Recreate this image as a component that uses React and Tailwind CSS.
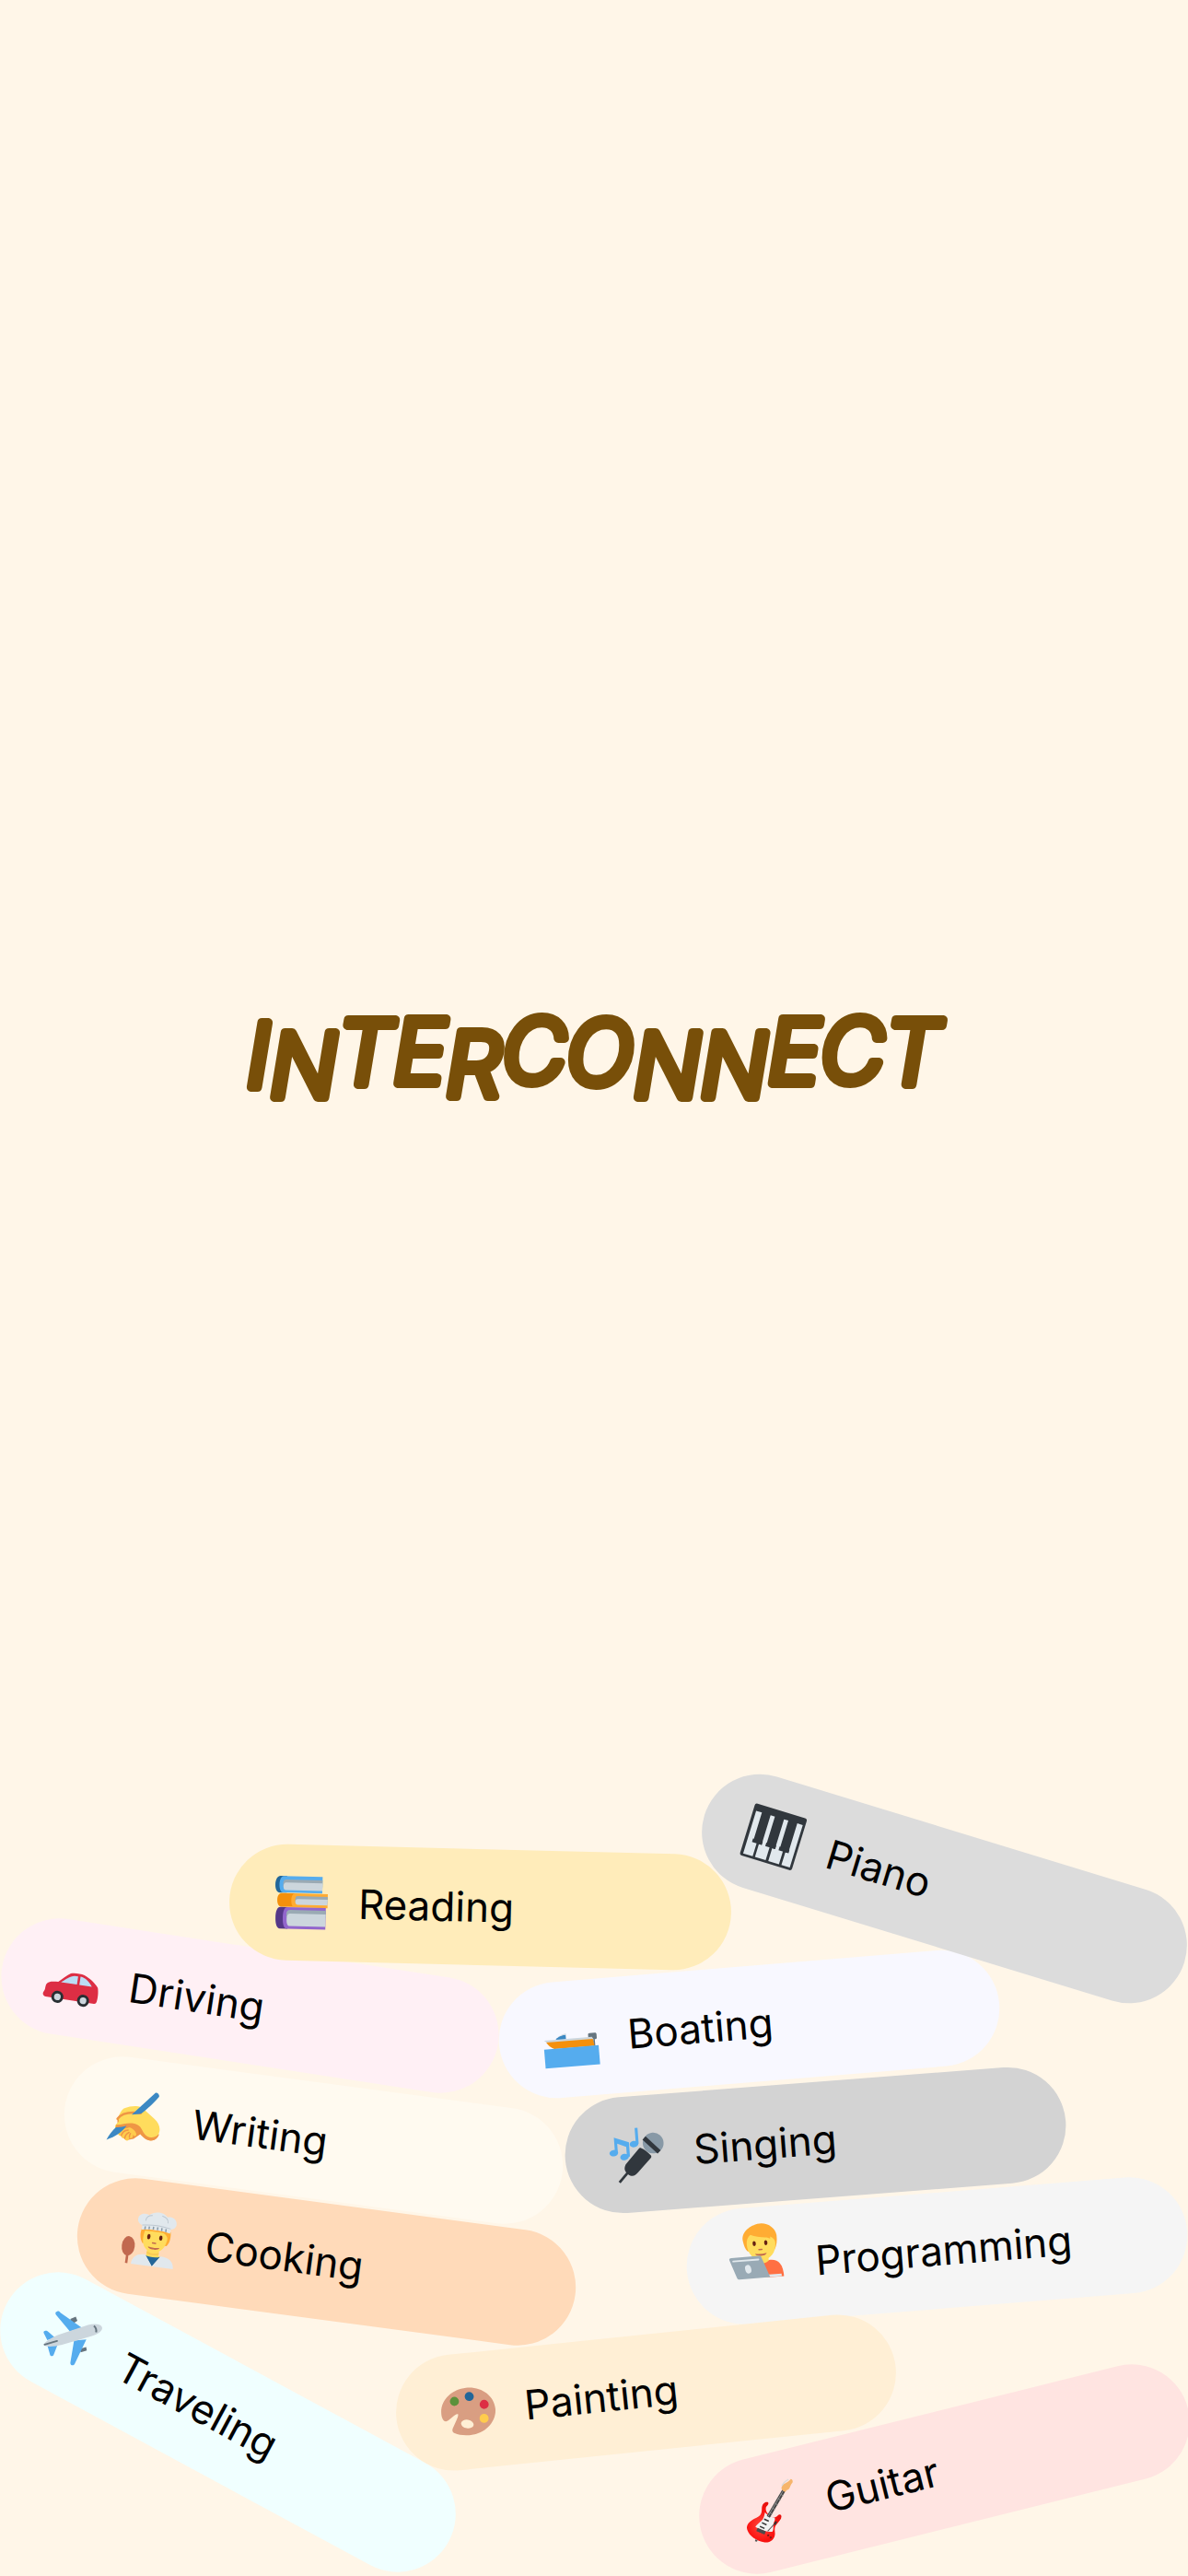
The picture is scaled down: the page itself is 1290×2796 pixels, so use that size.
import React from "react";

function Icon({ children }) {
  return (
    <svg viewBox="0 0 36 36" aria-hidden="true" className="size-full overflow-visible">
      {children}
    </svg>
  );
}

function PianoIcon() {
  return (
    <Icon>
      <rect width="36" height="36" rx="1.6" fill="#31373D" />
      <path fill="#E1E8ED" d="M2 4.8h4v18.800h2.600v10.700H2zM12 4.800h3v18.800h2.600v10.700h-7.400V25.400H12zM21.300 4.800h3v18.800h2.500v10.700h-7.400V25.400h1.900zM30.500 4.800h3.800v29.500h-5.800V25.400h2z" />
      <path fill="#31373D" d="M5.400 23h6.800v2.400H5.400zM14.600 23h6.900v2.400h-6.900zM23.800 23h6.900v2.400h-6.900z" />
    </Icon>
  );
}

function BooksIcon() {
  return (
    <Icon>
      <path fill="#226699" d="M3.600.3H8v11.100H3.400C1.500 11.400.3 9.300.3 6S1.700.3 3.600.3z" />
      <path fill="#55ACEE" d="M5.800.4h25.700v10.900H5.600C4 11.300 3 9.200 3 6S4.200.4 5.800.4z" />
      <path fill="#9AAAB4" d="M7.400 2.600h24.100v5H5.500v-3c0-1.200.7-2 1.900-2z" />
      <path fill="#CCD6DD" d="M7.500 4.600h24v5.100h-24C6.200 9.700 5.700 8.700 5.700 7.200s.5-2.600 1.800-2.600z" />
      <path fill="#F4900C" d="M4.700 11.700H14v9H4.700c-1.800 0-2.900-1.800-2.900-4.500s1.100-4.500 2.900-4.500z" />
      <path fill="#FFAC33" d="M13.600 11.700h21.600V21H13.600c-1.600 0-2.500-1.900-2.500-4.600s.9-4.700 2.500-4.700z" />
      <path fill="#9AAAB4" d="M15.200 13.500h20v4H13.700v-2c0-1.200.4-2 1.500-2z" />
      <path fill="#CCD6DD" d="M15.500 15.400h19.700v3.800H15.500c-1.200 0-1.700-.7-1.700-1.900s.5-1.900 1.700-1.900z" />
      <path fill="#553788" d="M4 20.900h5v14.300H4c-2.100 0-3.100-3-3.100-7.200s1-7.100 3.100-7.100z" />
      <path fill="#9266CC" d="M8.600 20.900h25.500v14.300H8.600C6.600 35.200 5.700 32.200 5.700 28s.9-7.100 2.900-7.100z" />
      <path fill="#9AAAB4" d="M10.600 22.700h23.500v5H8.100v-2.500c0-1.600.9-2.500 2.500-2.500z" />
      <path fill="#CCD6DD" d="M10.300 25.100h23.800v8.300H10.300c-1.400 0-2-1.700-2-4.100s.6-4.200 2-4.200z" />
    </Icon>
  );
}

function CarIcon() {
  return (
    <Icon>
      <path fill="#DD2E44" d="M2.300 22.400c1.900-.8 4-.9 6.100-1.100 2.600-2.400 5-5.300 7.400-6.700 2.300-.9 6.500-.9 9.100-.2 3.500 1.300 8 4.100 10 7 .9 2.700 1.100 7 .6 9.300-.2.900-.7 1.400-1.600 1.400H1.600C.3 32.100-.5 31.300-.5 30.200c0-1.100.7-1.700.9-2.800.2-1.900-.2-4.100 1.900-5z" />
      <path fill="#BBDDF5" d="M10.200 21.200c2.400-1.800 5.300-4.800 8.300-5.400h2.400v5.400zM22.500 15.700c3.400.2 6.300 2.500 8.400 5.500h-8.400z" />
      <circle cx="9.300" cy="31.200" r="4" fill="#292F33" />
      <circle cx="9.300" cy="31.200" r="2.200" fill="#CCD6DD" />
      <circle cx="26.500" cy="31.200" r="4" fill="#292F33" />
      <circle cx="26.500" cy="31.200" r="2.200" fill="#CCD6DD" />
    </Icon>
  );
}

function BoatIcon() {
  return (
    <Icon>
      <path fill="#66757F" d="M30.400 15h3.500c.7 0 1.100.4 1.100 1v2.200c0 .6-.4 1-1 1h-.4v4.600h-1.100v-4.600h-2c-.7 0-1.100-.4-1.100-1V16c0-.6.3-1 1-1z" />
      <path fill="#3B88C3" d="M7.300 17.900c1.700-1.900 4.100-2.900 7.300-3.100v3.100z" />
      <path fill="#CCD6DD" d="M9.800 15.600c1.400-.9 3.100-1.500 5-1.700v.9c-2 0-3.600.3-5 .8zM0 17.500h31.800l.9 1.500v1L1.800 19z" />
      <path fill="#F4900C" d="M1.400 18.900h30.900l.8 4.700H6.400c-2.200-1-3.900-2.700-5-4.700z" />
      <path fill="#55ACEE" d="M-.4 23.400h36.200V36H-.4z" />
    </Icon>
  );
}

function WritingIcon() {
  return (
    <Icon>
      <path fill="#EF9645" d="M5.500 20.500 9 14l11-1 12 12 2.300 2.400c-.7 3.100-3.100 5-6.300 4.800-2.700-.3-4.200-1.900-6-3.200l-4 3.600-4.700 1.500-5.800-3.600z" />
      <path fill="#FFCC4D" d="M7.300 30.200c-.5-1.700 3.600-5.100 7.400-4.800 2.800.4 5.700 3.700 4.600 4.900-.7.800-1.600.2-2.100-.4.300 1.200.1 2.400-.9 2.500-.5.100-.9 0-1.200-.4.100 1.200-.3 2.200-1.300 2.300-1.100.1-1.700-.7-1.600-1.700-1.200.8-2.700.3-2.400-1-.9.500-2.200 0-2.500-1.400z" />
      <path fill="none" stroke="#EF9645" strokeWidth=".9" strokeLinecap="round" d="M9.700 31.400c.3-2.100 1.800-3.600 4-4.100M12.200 32.900c0-1.900.8-3.300 2.300-4.200M15.100 31.800c-.1-.9 0-1.700.4-2.500" />
      <path fill="#FFDC5D" d="M6.200 19.600c.5-2.500 1.300-4.500 2.800-6.100 2.400-1.300 5.300-2.700 9-2.700 2.200.1 3.500.8 5 2l7.100 4.900c3 2.200 4.800 5.300 4.200 8.400-.6 3.400-3.900 5.100-7.100 4.200-3.900-1.100-4.200-5.300-8.500-6.100-3.200-.6-5.400.9-8.300 2.400-3.500 1.800-6.300.9-5.500-1.400.5-1.300 1.600-1.900 1.900-3z" />
      <path fill="none" stroke="#EF9645" strokeWidth="1.500" strokeLinecap="round" d="M5.700 20.800c2.200-3.900 6.200-5.900 14.800-5.700" />
      <path fill="#EF9645" d="M5.400 24.800c4-.4 6.700-2.300 10.500-2.400 5.800 0 6.200 3.200 8.800 5.900 2.500 2.500 6.100 2.500 9.600-.7-.6 3.100-3.400 5-6.300 4.600-5.200-.6-5-6.700-10.200-7.400-3.100-.4-6.300 3-12.400 2.600z" />
      <path fill="#3B88C3" d="M28.200.7c1-1.100 3.600.7 2.800 2.300-2.700 4.200-6.300 8.300-9.800 12.100-2 .9-4.200 1.300-6.500 1.800zM.3 35.500c.8-2.800 2.800-6.100 5.100-9 2.100.1 4.200-.9 6.900-1.900-2.300 4.400-6.500 8.300-12 10.900z" />
    </Icon>
  );
}

function MicIcon() {
  return (
    <Icon>
      <circle cx="29" cy="11.300" r="6.900" fill="#8899A6" />
      <path fill="none" stroke="#31373D" strokeWidth="3" d="m23.200 7.500 9.300 10" />
      <path fill="#31373D" d="M20.700 14c2.100 1 4.400 3.100 6.200 5.300.4.600.2 1.200-.2 1.800L17.500 30c-2.200 2.300-4.300 2.600-6.500.8-2.300-2-2.800-4.200-1.200-6.800l9.400-9.600c.4-.5.900-.7 1.500-.4z" />
      <path fill="none" stroke="#31373D" strokeWidth="1.700" d="m11.800 28.500-7 7.200" />
      <g fill="#55ACEE">
        <ellipse cx="2.500" cy="16" rx="2.900" ry="2.100" transform="rotate(-5 2.500 16)" />
        <ellipse cx="9.400" cy="19.100" rx="2.900" ry="2.100" transform="rotate(-5 9.400 19.100)" />
        <ellipse cx="16.300" cy="11" rx="2.900" ry="2.100" transform="rotate(-5 16.300 11)" />
        <path d="M3.300 5.700 13 9.600v9.500h-2v-6.600L5.200 9.900V16H3.300zM17.500.4h1.900V11h-1.900z" />
      </g>
    </Icon>
  );
}

function CookIcon() {
  return (
    <Icon>
      <path fill="#C1694F" d="M4.100 29h1.600v7H4.100z" />
      <ellipse cx="4.800" cy="24.600" rx="4.300" ry="6.500" fill="#C1694F" />
      <path fill="#FFDC5D" d="M17.500 25h8v6h-8z" />
      <path fill="#FFAC33" d="M12.200 12h19.300c.7 3.600.2 7.500-1.600 9.500H13.800c-1.800-2.400-2.500-5.900-1.600-9.500z" />
      <path fill="#FFDC5D" d="M14.500 13H30c.4 7.900-2.200 13.500-8.300 13.500-6.500 0-9.200-5.500-7.200-13.500z" />
      <path fill="#FFAC33" d="M25.500 12.500h5.700c.2 2-.1 4-.8 5.500-.3-2.500-2-4.500-4.900-5.500z" />
      <path fill="#F9CA55" d="M17.500 26.500c2.500 1.300 5.500 1.300 8 0v1.300c-2.500 1-5.500 1-8 0z" />
      <path fill="#E1E8ED" d="M12.200 12.700V9.800C8.300 8.900 7.800 4 11.300 2.400c2-.9 3.800-.3 4.700.1 3.100-3.300 9.500-3.300 12.100-.1 5.400-1.900 8.800 4.300 5 7.100-.8.500-1.300.7-1.900.7v2.700c-6-1.600-13-1.600-19-.2z" />
      <path fill="none" stroke="#BDC7D0" strokeWidth=".6" d="M14.100 6.500c.1-2.300 1.500-3.700 4.100-3.900M24.600 2c2.800.5 4.300 2 4.400 4.300M12.200 9.700c6-1.200 13-1.100 19 .1" />
      <path fill="none" stroke="#8899A6" strokeWidth=".9" d="M14.300 10.300v2M17 10v1.900M19.800 9.800v1.900M22.600 9.800v1.900M25.400 9.900v2M28.200 10.200v2.100" />
      <ellipse cx="17.500" cy="16.700" rx="1.100" ry="1.700" fill="#662113" />
      <ellipse cx="25.500" cy="16.600" rx="1.100" ry="1.700" fill="#662113" />
      <path fill="none" stroke="#C1694F" strokeWidth=".9" strokeLinecap="round" d="M20.500 20.600h2" />
      <path fill="#C1694F" d="M17.800 23.200c2.500.6 5.100.6 7.600 0-.2 2.200-7.400 2.200-7.600 0z" />
      <path fill="#FFDC5D" d="M17.400 28.500c2.500 1.500 6 1.500 8.800 0v2h-8.800z" />
      <path fill="#226699" d="M16.600 29.100c3 1.200 7 1.200 10.200 0L22 36z" />
      <path fill="#E1E8ED" d="M8 36c.1-5 3.300-7.300 8.800-7.300L22 36l4.800-7.300c5.800 0 9.200 2.300 9.300 7.300z" />
    </Icon>
  );
}

function CoderIcon() {
  return (
    <Icon>
      <path fill="#FF7043" d="M20.300 26.500c1.200-1.200 2.800-2 5.500-2 5.200 0 8.200 3.300 8.200 11.500H22z" />
      <path fill="#FFDC5D" d="M16 20h8.700v4.700c-.7 1-2.200 1.600-4.200 1.900z" />
      <path fill="#FFAC33" d="M8.700 11C7.700 5.200 13.500 1.800 16.300 1 23.600-2 30.600 2.700 31.200 8.500c.2 3.900-.5 7.200-2 9.400H11.300c-1.500-1.900-2.200-4-2.600-6.900z" />
      <path fill="#FFDC5D" d="M11 13.300c0-2.900 1-4.800 2.900-6.200 3 1.400 7 2.200 10.500 2.400 1 .1 1.600 1 2.600.9-.2-.5-.2-.9-.1-1.200 2 1 3.100 2.300 3.100 4.500-.1 6.300-4 10.500-9.500 10.500S11 19.500 11 13.300z" />
      <ellipse cx="16" cy="13" rx="1.100" ry="1.700" fill="#662113" />
      <ellipse cx="23.700" cy="13" rx="1.100" ry="1.700" fill="#662113" />
      <path fill="none" stroke="#C1694F" strokeWidth=".9" strokeLinecap="round" d="M18.800 17.200h2" />
      <path fill="#C1694F" d="M16.100 19.800c2.500.5 5.100.5 7.600 0-.3 2.200-7.300 2.200-7.600 0z" />
      <path fill="#E1E8ED" d="M22 34.200h10.500v1.700H22z" />
      <path fill="#99AAB5" d="M.2 21.400h18.100c.9 0 1.400.2 1.700 1L24.800 36H4.500c-1 0-1.400-.4-1.700-1.200L-1.200 23c-.4-1 .2-1.600 1.400-1.600z" />
      <path fill="none" stroke="#E1E8ED" strokeWidth="1.200" strokeLinecap="round" d="M1.200 23.700h16.700" />
      <ellipse cx="10.700" cy="29.600" rx="2" ry="2.900" fill="#E1E8ED" transform="rotate(-12 10.700 29.600)" />
    </Icon>
  );
}

function PlaneIcon() {
  return (
    <Icon>
      <path fill="#66757F" d="m12 7.200 2.500-3 2.200 1.900-2.200 4zM26.800 21.800l3.300-3.200 1.500 1.900-3 3z" />
      <path fill="#55ACEE" d="M2 7c.7-.8 1.300-.7 2.300-.3l17.400 2-6 6L2.400 9.400C1.300 8.800 1.200 7.900 2 7zM27.800 14.200l.9 17.800c0 1.900-2.100 2.400-2.900.7l-4.800-14zM.9 22.300c.6-.8 1.500-.8 2.400-.6l5.400 1.200-3.400 4-4.200-3c-.7-.5-.7-1.100-.2-1.600zM12.800 27l.8 6.300c.2 1.500-1.700 2.200-2.500.8L7.100 30z" />
      <path fill="#CCD6DD" d="M4.700 30.700c-.8-1.500 2.400-7 5.600-10.800L24.200 5.100c2.800-2.600 6.800-4.800 8.800-3.100 2 1.700-.1 5.500-3 8.400L15.300 24.900c-4 3.800-9.300 7-10.600 5.800z" />
      <path fill="none" stroke="#66757F" strokeWidth="1.100" strokeLinecap="round" d="m5.100 30.300 6.100-6.100" />
      <path fill="none" stroke="#66757F" strokeWidth="1.200" d="M27.900 3.800c1.700.4 2.900 1.500 3.300 3.100" />
    </Icon>
  );
}

function PaletteIcon() {
  return (
    <Icon>
      <path fill="#D99E82" d="M18 2.200c9.900 0 18 6.800 18 15.700 0 8.500-8.100 15.800-18 15.800-4.200 0-7.900-.8-10.500-2.300-1.400-.9-1.600-2-.9-3.400l3.200-5.500c.8-1.400 1.400-2.600 1.200-3.500-1-.4-2.500.6-3.700 1.500l-3 2C2.300 23.800.6 22.500.1 19.500-1 9.600 8.100 2.200 18 2.200z" />
      <ellipse cx="16.500" cy="26.200" rx="4.200" ry="2.800" fill="#FFEFD5" transform="rotate(16 16.500 26.200)" />
      <circle cx="9.500" cy="10.400" r="3" fill="#5C913B" />
      <circle cx="19.600" cy="8.200" r="3" fill="#226699" />
      <circle cx="28.900" cy="14.400" r="3" fill="#DD2E44" />
      <circle cx="27.900" cy="23.600" r="3" fill="#FFCC4D" />
    </Icon>
  );
}

function GuitarIcon() {
  return (
    <Icon>
      <defs>
        <radialGradient id="guitar-body" cx=".4" cy=".55" r=".65">
          <stop offset="0" stopColor="#FF4A40" />
          <stop offset=".6" stopColor="#FA1210" />
          <stop offset="1" stopColor="#E0100C" />
        </radialGradient>
      </defs>
      <path fill="url(#guitar-body)" d="M17.700 10.800c-1.400-1.200-4-.2-4.900 2.500-.9 3.400-1.500 4.700-5 5.500C2.800 19.600-.3 21.700-.1 25c.3 4.500 4.200 8.700 9.200 11 4 1.200 7-.7 8-3.900.5-2 .3-4.200 2.300-5.700 2-1.400 4.200-2.700 4.600-4.400.3-1.500-1-2-2.300-1.200-1.700 1-3.300 1-4.400-.3-1.600-2-2.900-4.300-1.900-6.500.4-1.200 2.800-1.400 2.300-3.200z" />
      <path fill="#F1F1F1" d="M14.100 16.800c.8 2.100 3 4 5.300 4.900.4 1.500-1 2.300-1.800 4-.7 1.700-.5 3.700-2 4.700-3.700-.9-7.800-3.400-10-6 1.500-1.400 4.300-2.200 6-3.600 1.200-1.100 1.700-2.600 2.500-4z" />
      <path fill="none" stroke="#444" strokeWidth="2.300" d="M15.500 20.100 29.900 5.500" />
      <path fill="none" stroke="#999" strokeWidth=".5" d="M15.400 19.800 29.700 5.300M17 17.500l1.500 1.500M19.500 15l1.500 1.500M22 12.500l1.500 1.500M24.600 9.900l1.500 1.500M27 7.500 28.500 9" />
      <path fill="#F6B56C" d="M28.700 5.200c-.5-2 .8-3.400 2.700-3.800 1.500-.4 3-.7 4.600-2 1.300.4 1.200 2.500 0 3-1.200.7-2.200 3.600-3.900 3.500-.6 0-1.200.7-1.800 1z" />
      <path fill="none" stroke="#D9D9D9" strokeWidth=".8" d="M29.200 2.400c1.200-1.500 3.100-2.600 5.300-3.100" />
      <path fill="none" stroke="#333" strokeWidth=".9" d="m12.500 20.900 2.600 2.100M10.500 22.900l2.600 2.100M8.600 24.900l2.600 2.100" />
      <path fill="none" stroke="#4A4A4A" strokeWidth="2.300" d="m6.200 26.500 4.700 3.500" />
      <path fill="none" stroke="#555" strokeWidth=".6" d="m12.800 29.300 7.400-4.900" />
      <path fill="none" stroke="#333" strokeWidth="1.300" d="m18.300 26.200 1.500-1.700" />
      <circle cx="12.500" cy="32" r=".7" fill="#7B1B18" />
      <circle cx="13.700" cy="33.800" r=".7" fill="#7B1B18" />
      <path fill="#555" d="m3.600 32.600 1.300.8-.7.9-1.200-.6z" />
    </Icon>
  );
}

const hobbies = [
  { name: "Driving", Art: CarIcon, pill: "left-[-1px] top-[198px] rotate-[8.7deg] bg-[#FFF0F5]" },
  { name: "Reading", Art: BooksIcon, pill: "left-[249px] top-[91px] rotate-[1.45deg] bg-[#FFECBA]" },
  { name: "Boating", Art: BoatIcon, pill: "left-[541px] top-[218px] rotate-[-4.7deg] bg-[#F8F8FF]" },
  { name: "Piano", Art: PianoIcon, pill: "left-[753px] top-[71px] rotate-[17deg] bg-[#DCDCDC]" },
  { name: "Writing", Art: WritingIcon, pill: "left-[68px] top-[344px] rotate-[7.6deg] bg-[#FFFAF0]" },
  { name: "Singing", Art: MicIcon, pill: "left-[613px] top-[344px] rotate-[-4.4deg] bg-[#D3D3D3]" },
  { name: "Cooking", Art: CookIcon, pill: "left-[82px] top-[476px] rotate-[7.6deg] bg-[#FFDAB9]" },
  { name: "Programming", Art: CoderIcon, raised: true, pill: "left-[745px] top-[464px] rotate-[-4.6deg] bg-[#F5F5F5]" },
  { name: "Traveling", Art: PlaneIcon, pill: "left-[-25px] top-[650px] rotate-[28.4deg] bg-[#F0FFFF]" },
  { name: "Painting", Art: PaletteIcon, pill: "left-[429px] top-[618px] rotate-[-5.9deg] bg-[#FFEFD5]" },
  { name: "Guitar", Art: GuitarIcon, pill: "left-[753px] top-[701px] rotate-[-14deg] bg-[#FFE4E1]" },
];

function HobbyPill({ name, Art, pill, raised }) {
  return (
    <li className={`absolute flex h-[126px] w-[545px] items-center gap-8 rounded-full pl-[49px] ${pill}`}>
      <span className={raised ? "mb-8 size-[59px] shrink-0" : "size-[59px] shrink-0"}>
        <Art />
      </span>
      <span className="text-[44px] leading-[56px] text-black">{name}</span>
    </li>
  );
}

export default function App() {
  return (
    <main className="flex min-h-screen flex-col overflow-hidden bg-[#FFF6E8] font-['Inter',sans-serif]">
      <header className="grid flex-1 grid-rows-[20fr_auto_13fr] justify-items-center">
        <h1 className="row-start-2 w-[62%]">
          <svg viewBox="0 0 800 108" className="w-full overflow-visible">
            <text
              x="400"
              y="81"
              dy="3 11 -14 -1 14 -15 2 14 0 -15 -1 2"
              textAnchor="middle"
              strokeLinejoin="round"
              className="fill-[#784F09] stroke-[#784F09] stroke-[10px] text-[96px] font-light italic"
            >
              INTERCONNECT
            </text>
          </svg>
        </h1>
      </header>
      <ul className="relative mx-auto h-[880px] w-full max-w-[1290px]">
        {hobbies.map((hobby) => (
          <HobbyPill key={hobby.name} {...hobby} />
        ))}
      </ul>
    </main>
  );
}
